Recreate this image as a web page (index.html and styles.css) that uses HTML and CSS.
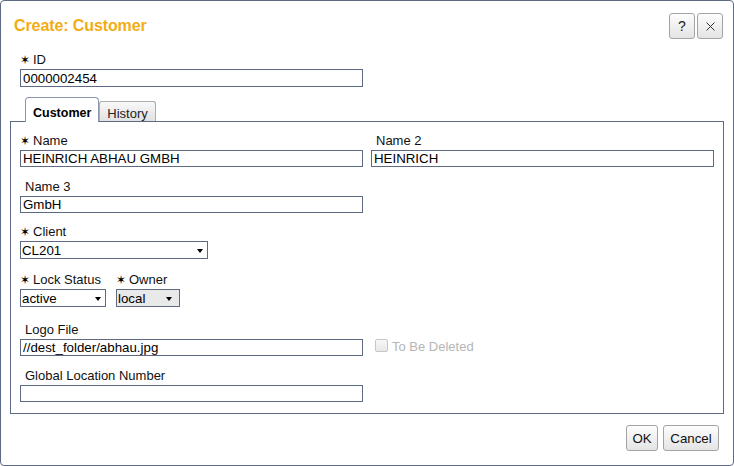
FILE: index.html
```html
<!DOCTYPE html>
<html>
<head>
<meta charset="utf-8">
<link rel="stylesheet" href="styles.css">
</head>
<body>
<div class="dialog">
  <header class="dlg-head">
    <h1 class="dlg-title">Create: Customer</h1>
    <div class="head-btns">
      <button class="btn icon-btn">?</button>
      <button class="btn icon-btn"><svg width="9" height="9" viewBox="0 0 9 9"><path d="M0.5 0.5L8.5 8.5M8.5 0.5L0.5 8.5" stroke="#333" stroke-width="1" fill="none"/></svg></button>
    </div>
  </header>

  <div class="field id-field">
    <label class="lbl"><span class="req">&#10038;</span>ID</label>
    <input class="txt" value="0000002454">
  </div>

  <div class="tabs">
    <div class="tab tab-active">Customer</div>
    <div class="tab tab-idle">History</div>
  </div>

  <div class="panel">
    <div class="row grid2">
      <div class="field">
        <label class="lbl"><span class="req">&#10038;</span>Name</label>
        <input class="txt" value="HEINRICH ABHAU GMBH">
      </div>
      <div class="field">
        <label class="lbl lbl-opt">Name 2</label>
        <input class="txt" value="HEINRICH">
      </div>
    </div>

    <div class="row grid2 gap13">
      <div class="field">
        <label class="lbl lbl-opt">Name 3</label>
        <input class="txt" value="GmbH">
      </div>
    </div>

    <div class="row gap12">
      <div class="field">
        <label class="lbl"><span class="req">&#10038;</span>Client</label>
        <span class="sel sel-client"><select><option>CL201</option></select></span>
      </div>
    </div>

    <div class="row lock-row gap14">
      <div class="field">
        <label class="lbl"><span class="req">&#10038;</span>Lock Status</label>
        <span class="sel sel-lock"><select><option>active</option></select></span>
      </div>
      <div class="field">
        <label class="lbl"><span class="req">&#10038;</span>Owner</label>
        <span class="sel sel-owner"><select><option>local</option></select></span>
      </div>
    </div>

    <div class="row grid2 gap16">
      <div class="field">
        <label class="lbl lbl-opt">Logo File</label>
        <input class="txt" value="//dest_folder/abhau.jpg">
      </div>
      <div class="check-cell">
        <span class="chk"></span>
        <span class="chk-text">To Be Deleted</span>
      </div>
    </div>

    <div class="row grid2 gap13">
      <div class="field">
        <label class="lbl lbl-opt">Global Location Number</label>
        <input class="txt" value="">
      </div>
    </div>
  </div>

  <footer class="dlg-foot">
    <button class="btn foot-btn foot-ok">OK</button>
    <button class="btn foot-btn foot-cancel">Cancel</button>
  </footer>
</div>
</body>
</html>
```

FILE: styles.css
```css
* { box-sizing: border-box; }

html, body {
  margin: 0;
  padding: 0;
  background: #fff;
}

body {
  font-family: "Liberation Sans", Arial, sans-serif;
  font-size: 13px;
  color: #000;
}

.dialog {
  width: 734px;
  height: 466px;
  border: 1px solid #5e6a84;
  border-radius: 4px;
  padding: 0 9px;
  display: flex;
  flex-direction: column;
}

.dlg-head {
  display: flex;
  justify-content: space-between;
  align-items: center;
  padding: 12px 1px 0 3px;
}

.dlg-title {
  margin: 0;
  padding-left: 1px;
  font-size: 16px;
  font-weight: bold;
  line-height: 26px;
  letter-spacing: -0.1px;
  color: #f2ad14;
}

.head-btns {
  display: flex;
  gap: 2px;
}

.btn {
  font-family: "Liberation Sans", Arial, sans-serif;
  border: 1px solid #a3a3a3;
  border-radius: 3px;
  background: linear-gradient(#fdfdfd, #e4e4e4);
  color: #222;
  padding: 0;
  margin: 0;
}

.icon-btn {
  width: 26px;
  height: 26px;
  font-size: 14px;
  display: flex;
  align-items: center;
  justify-content: center;
}

.field {
  display: flex;
  flex-direction: column;
  align-items: flex-start;
}

.id-field {
  margin-top: 14px;
  padding-left: 10px;
  margin-bottom: 10px;
}

.lbl {
  line-height: 14px;
  height: 15px;
  margin-bottom: 1px;
  color: #111;
  white-space: nowrap;
}

.lbl-opt {
  padding-left: 5px;
}

.req {
  display: inline-block;
  width: 9px;
  margin-right: 4px;
  font-family: "DejaVu Sans", sans-serif;
  font-size: 12px;
  line-height: 14px;
  vertical-align: top;
  color: #000;
}

.txt {
  width: 343px;
  height: 17px;
  border: 1px solid #5e6a84;
  padding: 0 1px 0 2px;
  margin: 0;
  font-family: "Liberation Sans", Arial, sans-serif;
  font-size: 13.3px;
  color: #000;
  background: #fff;
  border-radius: 0;
  outline: none;
}

.id-field .txt {
  height: 18px;
}

.tabs {
  display: flex;
  align-items: flex-end;
  margin-left: 15px;
  margin-bottom: -1px;
  position: relative;
  z-index: 1;
}

.tab {
  line-height: 15px;
  white-space: nowrap;
}

.tab-active {
  border: 1px solid #8b96aa;
  border-bottom: none;
  border-radius: 4px 4px 0 0;
  background: #fff;
  padding: 8px 7px 1px;
  font-weight: bold;
  font-size: 12.5px;
  color: #000;
}

.tab-idle {
  border: 1px solid #adadad;
  border-bottom: none;
  border-radius: 3px 3px 0 0;
  background: linear-gradient(#f8f8f8, #e2e2e2);
  padding: 4px 7px 0;
  margin-bottom: 1px;
  font-size: 13px;
  color: #222;
}

.panel {
  border: 1px solid #5e6a84;
  padding: 12px 9px 11px;
}

.grid2 {
  display: grid;
  grid-template-columns: 343px 343px;
  column-gap: 8px;
}

.gap12 { margin-top: 12px; }
.gap13 { margin-top: 13px; }
.gap14 { margin-top: 14px; }
.gap16 { margin-top: 16px; }

.sel {
  display: inline-block;
  position: relative;
}

.sel select {
  -webkit-appearance: none;
  appearance: none;
  display: block;
  height: 18px;
  border: 1px solid #5e6a84;
  border-radius: 0;
  padding: 0 1px;
  margin: 0;
  font-family: "Liberation Sans", Arial, sans-serif;
  font-size: 13.3px;
  color: #000;
  background: #fff;
  outline: none;
}

.sel::after {
  content: "";
  position: absolute;
  top: 8px;
  right: 5px;
  border-left: 3.5px solid transparent;
  border-right: 3.5px solid transparent;
  border-top: 4px solid #000;
}

.sel-client select { width: 188px; }
.sel-lock select { width: 86px; }
.sel-owner select { width: 64px; background: #e9e9e9; }
.sel-owner::after { right: 8px; }

.lock-row {
  display: flex;
  gap: 10px;
}

.check-cell {
  display: flex;
  align-items: flex-start;
  padding-top: 16px;
  padding-left: 4px;
}

.chk {
  width: 13px;
  height: 13px;
  border: 1px solid #c6c6c6;
  border-radius: 2px;
  background: linear-gradient(#f7f7f7, #e9e9e9);
}

.chk-text {
  margin-left: 4px;
  line-height: 15px;
  color: #b5b5b5;
}

.dlg-foot {
  display: flex;
  justify-content: flex-end;
  gap: 5px;
  margin-top: 11px;
  margin-right: 5px;
}

.foot-btn {
  height: 26px;
  padding: 0;
  font-size: 13.3px;
  color: #111;
}

.foot-ok { width: 32px; }
.foot-cancel { width: 56px; }
```
